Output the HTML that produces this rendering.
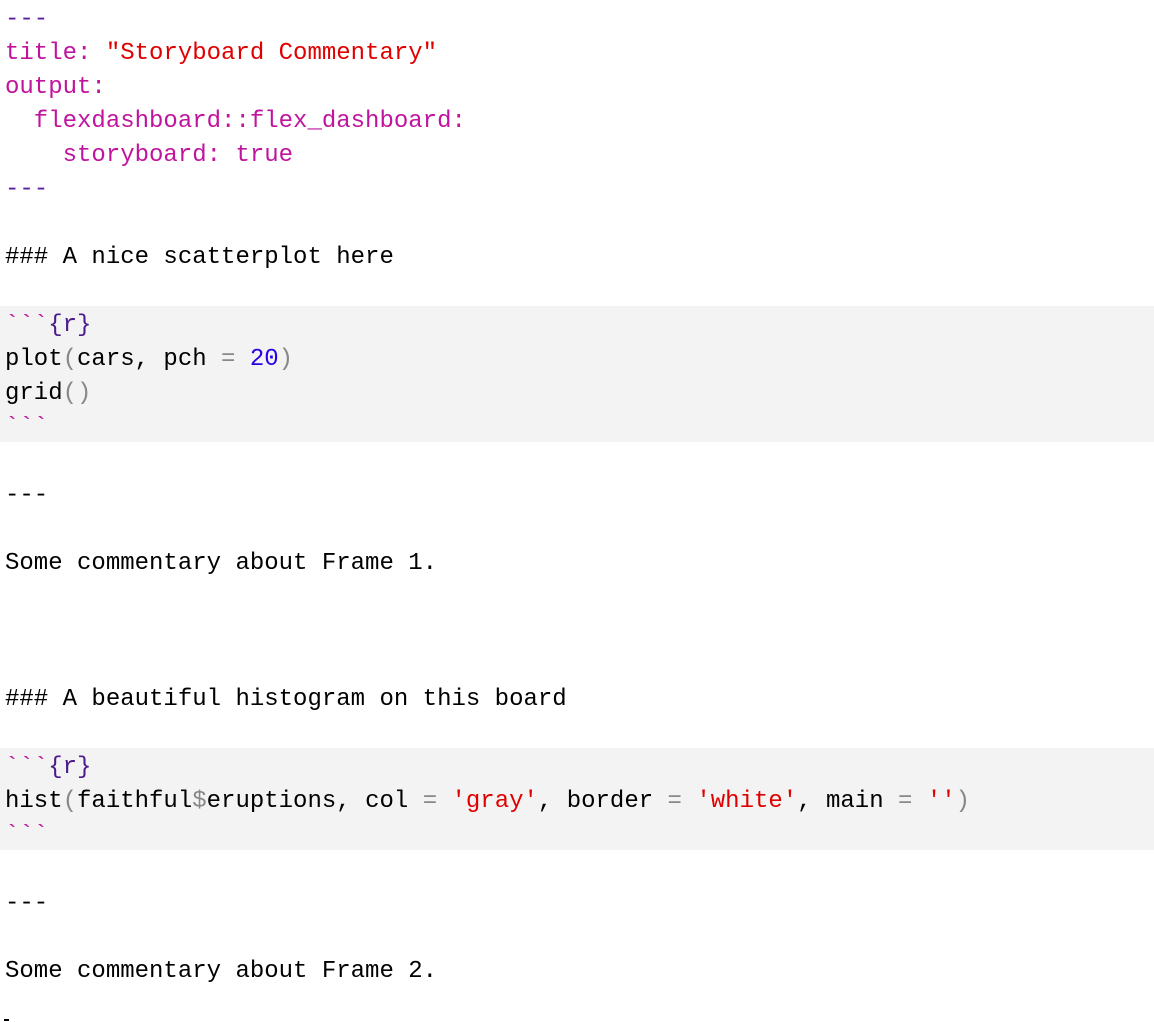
<!DOCTYPE html>
<html><head><meta charset="utf-8"><style>
html,body{margin:0;padding:0;background:#fff;width:1154px;height:1022px;overflow:hidden}
.l{height:34px;line-height:39px;overflow:hidden;font-family:"Liberation Mono",monospace;font-size:24px;white-space:pre;padding-left:5px;color:#000}
.g{background:#f3f3f3}
.d{color:#5a1fa0}.k{color:#c0149e}.s{color:#e00000}.n{color:#2a00e6}.p{color:#888}.b{color:#c0149e}.r{color:#4b1a8a}
#cur{position:absolute;left:4px;top:1019px;width:5px;height:2px;background:#000}
</style></head><body>
<div class="l"><span class="d">---</span></div>
<div class="l"><span class="k">title: </span><span class="s">"Storyboard Commentary"</span></div>
<div class="l"><span class="k">output:</span></div>
<div class="l"><span class="k">  flexdashboard::flex_dashboard:</span></div>
<div class="l"><span class="k">    storyboard: true</span></div>
<div class="l"><span class="d">---</span></div>
<div class="l"> </div>
<div class="l">### A nice scatterplot here</div>
<div class="l"> </div>
<div class="l g"><span class="b">&#96;&#96;&#96;</span><span class="r">{r}</span></div>
<div class="l g">plot<span class="p">(</span>cars, pch <span class="p">=</span> <span class="n">20</span><span class="p">)</span></div>
<div class="l g">grid<span class="p">()</span></div>
<div class="l g"><span class="b">&#96;&#96;&#96;</span></div>
<div class="l"> </div>
<div class="l">---</div>
<div class="l"> </div>
<div class="l">Some commentary about Frame 1.</div>
<div class="l"> </div>
<div class="l"> </div>
<div class="l"> </div>
<div class="l">### A beautiful histogram on this board</div>
<div class="l"> </div>
<div class="l g"><span class="b">&#96;&#96;&#96;</span><span class="r">{r}</span></div>
<div class="l g">hist<span class="p">(</span>faithful<span class="p">$</span>eruptions, col <span class="p">=</span> <span class="s">'gray'</span>, border <span class="p">=</span> <span class="s">'white'</span>, main <span class="p">=</span> <span class="s">''</span><span class="p">)</span></div>
<div class="l g"><span class="b">&#96;&#96;&#96;</span></div>
<div class="l"> </div>
<div class="l">---</div>
<div class="l"> </div>
<div class="l">Some commentary about Frame 2.</div>
<div id="cur"></div>
</body></html>
